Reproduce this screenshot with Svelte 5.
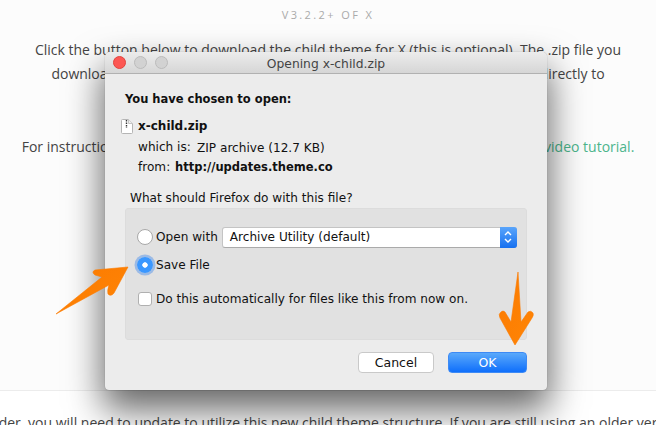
<script>
  const gradientId = 'arrowFill';
</script>

<div class="page">
  <section class="upper">
    <h4 class="version">V3.2.2+ OF X</h4>
    <p class="copy">Click the button below to download the child theme for X (this is optional). The .zip file you</p>
    <p class="copy">downloaded contains the child theme files, which you can install or upload directly to</p>
    <p class="copy hidden-line">your site.</p>
    <p class="copy instr">For instructions on how to install the child theme, please watch this very helpful <a href="#v">video tutorial.</a></p>
  </section>
  <section class="lower">
    <p class="clip">folder, you will need to update to utilize this new child theme structure. If you are still using an older version</p>
  </section>

  <div class="dialog">
    <header class="titlebar">
      <span class="light red"></span><span class="light"></span><span class="light"></span>
      <span class="title">Opening x-child.zip</span>
    </header>
    <div class="body">
      <div class="chosen">You have chosen to open:</div>
      <div class="file">
        <svg class="fileicon" width="12" height="15" viewBox="0 0 12 15">
          <path d="M.5 1.5a1 1 0 0 1 1-1h6l4 4v9a1 1 0 0 1-1 1h-9a1 1 0 0 1-1-1z" fill="#fff" stroke="#b5b5b5"/>
          <path d="M5.5 1v8" stroke="#333" stroke-width="1.4" stroke-dasharray="1.5 1"/>
          <path d="M7.5 .5v4h4" fill="#eee" stroke="#c4c4c4"/>
        </svg>
        <b>x-child.zip</b>
      </div>
      <div class="meta"><span class="k1">which is:</span><span class="v1">ZIP archive (12.7 KB)</span></div>
      <div class="meta m2"><span class="k2">from:</span><b>http://updates.theme.co</b></div>
      <div class="question">What should Firefox do with this file?</div>
      <div class="group">
        <div class="row first">
          <span class="radio"></span><span class="lab">Open with</span>
          <div class="select">
            <span>Archive Utility (default)</span>
            <span class="stepper">
              <svg width="10" height="16" viewBox="0 0 10 16" fill="none" stroke="#fff" stroke-width="1.4"><path d="M2 6l3-3 3 3M2 10l3 3 3-3"/></svg>
            </span>
          </div>
        </div>
        <div class="row second">
          <span class="radio on"></span><span class="lab">Save File</span>
        </div>
        <div class="row third">
          <span class="check"></span><span class="lab">Do this automatically for files like this from now on.</span>
        </div>
      </div>
      <div class="actions">
        <button class="btn">Cancel</button>
        <button class="btn ok">OK</button>
      </div>
    </div>
  </div>

  <svg class="arrows" width="656" height="425" viewBox="0 0 656 425">
    <defs>
      <linearGradient id={gradientId} x1="0" y1="0" x2="1" y2="1">
        <stop offset="0" stop-color="#fb7a00"/><stop offset="1" stop-color="#ff8506"/>
      </linearGradient>
    </defs>
    <path d="M56 314 L102 277 L95 275 Q91 272 95 270 L128 267 L114 293 Q111 297 108 294 Q107 291 109 285Z" fill="url(#{gradientId})" stroke="#fb7a00" stroke-width=".6" stroke-linejoin="round"/>
    <path d="M518 272 L521 322 L528 312 Q531 310 533 313 Q534 315 532 318 L515 345 L500 318 Q498 314 501 312 Q503 310 505 312 L511 322Z" fill="url(#{gradientId})" stroke="#fb7a00" stroke-width=".6" stroke-linejoin="round"/>
  </svg>
</div>

<style>
  :global(body) { margin: 0; background: #fff; }
  .page {
    position: relative;
    width: 656px;
    height: 425px;
    overflow: hidden;
    font-family: "Open Sans", sans-serif;
    color: #444;
    background: #fff;
  }
  .upper {
    height: 391px;
    background: #fcfcfc;
    border-bottom: 1px solid #ececec;
    box-sizing: border-box;
    padding-top: 8px;
    text-align: center;
  }
  .version {
    margin: 0 0 16px;
    font-size: 11px;
    line-height: 14px;
    font-weight: 400;
    letter-spacing: 2.4px;
    color: #aaa;
  }
  .copy {
    margin: 0;
    font-size: 14px;
    line-height: 24px;
    white-space: nowrap;
    color: #444;
  }
  .hidden-line { height: 24px; }
  .instr { margin-top: 25px; }
  .copy a { color: #4cb58c; text-decoration: none; }
  .lower { height: 33px; position: relative; }
  .clip {
    position: absolute;
    left: -18px;
    top: 22px;
    margin: 0;
    font-size: 14px;
    line-height: 20px;
    white-space: nowrap;
  }
  .dialog {
    position: absolute;
    left: 105px;
    top: 52px;
    width: 442px;
    height: 338px;
    border-radius: 5px 5px 4px 4px;
    background: #ececec;
    box-shadow: 0 18px 36px 2px rgba(0,0,0,.6), 0 0 1px rgba(0,0,0,.4);
    font-family: "DejaVu Sans", sans-serif;
    font-size: 12.1px;
    color: #111;
    overflow: hidden;
  }
  .titlebar {
    position: relative;
    height: 21px;
    display: flex;
    align-items: center;
    gap: 8px;
    padding-left: 8px;
    background: linear-gradient(#ececec, #d6d6d6);
    border-bottom: 1px solid #b1b1b1;
  }
  .light {
    width: 11px;
    height: 11px;
    border-radius: 50%;
    background: #d2d2d2;
    border: .5px solid #bbb;
    box-sizing: content-box;
  }
  .red { background: #fc5753; border-color: #e0443e; }
  .title {
    position: absolute;
    left: 0;
    right: 0;
    top: 4px;
    text-align: center;
    font-size: 12.3px;
    line-height: 16px;
    color: #444;
  }
  .body { position: relative; padding: 0 20px; }
  .chosen { padding-top: 18px; font-weight: 700; line-height: 14px; font-size: 11.5px; }
  .file { display: flex; align-items: center; gap: 5px; margin: 12px 0 0 -4px; font-size: 12px; line-height: 16px; }
  .fileicon { display: block; }
  .meta { display: flex; margin: 6px 0 0 13px; line-height: 14px; }
  .m2 { margin-top: 5px; font-size: 11.5px; }
  .k1 { width: 59px; }
  .k2 { width: 37px; font-size: 12.1px; }
  .v1 { padding-top: 1px; }
  .question { margin: 17px 0 0 5px; line-height: 14px; }
  .group {
    margin-top: 3px;
    width: 402px;
    height: 132px;
    box-sizing: border-box;
    background: #e1e1e1;
    border: 1px solid #dcdcdc;
    border-radius: 3px;
    padding-left: 11px;
  }
  .row { display: flex; align-items: center; gap: 3px; height: 20px; }
  .first { margin-top: 18px; }
  .second { margin-top: 8px; }
  .third { margin-top: 14px; }
  .radio {
    width: 16px; height: 16px; box-sizing: border-box;
    border-radius: 50%;
    background: #fff;
    border: 1px solid #a8a8a8;
  }
  .radio.on {
    background: radial-gradient(circle, #fff 0 2.4px, #3a97ff 3px);
    border: none;
    box-shadow: 0 0 0 2.5px rgba(70,140,235,.45);
  }
  .check {
    width: 14px; height: 14px; box-sizing: border-box;
    border-radius: 3px;
    background: #fff;
    border: 1px solid #b0b0b0;
    margin-left: 1px;
    margin-right: 1px;
  }
  .select {
    margin-left: 1px;
    width: 295px;
    height: 21px;
    box-sizing: border-box;
    display: flex;
    align-items: center;
    justify-content: space-between;
    padding-left: 7px;
    background: #fff;
    border: 1px solid #c4c4c4;
    border-bottom-color: #aaa;
    border-radius: 3px;
    position: relative;
  }
  .stepper {
    position: absolute;
    right: -1px;
    top: -1px;
    width: 17px;
    height: 21px;
    display: flex;
    align-items: center;
    justify-content: center;
    background: linear-gradient(#5aa5fb, #1670f0);
    border-radius: 0 3px 3px 0;
  }
  .actions {
    display: flex;
    justify-content: flex-end;
    gap: 14px;
    margin: 12px 0 0 0;
  }
  .btn {
    font: inherit;
    font-size: 12.5px;
    width: 76px;
    height: 21px;
    padding: 0;
    background: #fff;
    border: 1px solid #c9c9c9;
    border-radius: 4px;
    color: #111;
  }
  .ok {
    width: 79px;
    background: linear-gradient(#5aa9fb, #0f6ffb);
    border-color: #3d8af5;
    color: #fff;
  }
  .arrows { position: absolute; left: 0; top: 0; pointer-events: none; }
</style>
